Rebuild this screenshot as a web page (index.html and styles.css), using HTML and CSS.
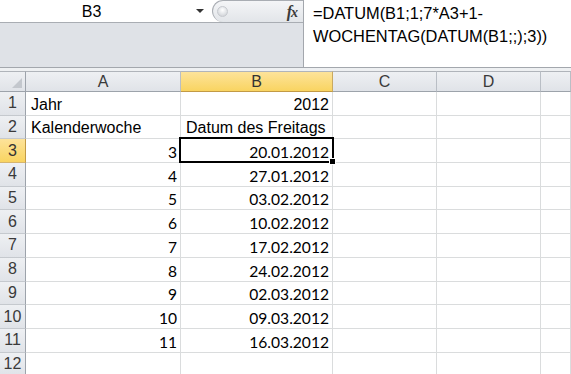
FILE: index.html
```html
<!DOCTYPE html>
<html lang="de">
<head>
<meta charset="utf-8">
<title>Excel</title>
<link rel="stylesheet" href="styles.css">
</head>
<body>
<div class="app">
  <div class="topbar">
    <div class="leftpane">
      <div class="nbrow">
        <div class="namebox"><span class="nbtext">B3</span><span class="nbarrow"></span></div>
        <div class="pill"><span class="knob"></span><span class="fx"><i>f</i><i class="x">x</i></span></div>
      </div>
    </div>
    <div class="formula">=DATUM(B1;1;7*A3+1-<br>WOCHENTAG(DATUM(B1;;);3))</div>
  </div>
  <div class="band"></div>
  <div class="sheet">
    <div class="hd corner"><span class="tri"></span></div>
    <div class="hd ch">A</div>
    <div class="hd ch sel">B</div>
    <div class="hd ch">C</div>
    <div class="hd ch">D</div>
    <div class="hd ch last"></div>

    <div class="hd rh">1</div>
    <div class="c txt">Jahr</div>
    <div class="c num">2012</div>
    <div class="c"></div><div class="c"></div><div class="c"></div>

    <div class="hd rh">2</div>
    <div class="c txt">Kalenderwoche</div>
    <div class="c txt">Datum des Freitags</div>
    <div class="c"></div><div class="c"></div><div class="c"></div>

    <div class="hd rh sel">3</div>
    <div class="c num cal">3</div>
    <div class="c num cal active">20.01.2012<span class="selbox"></span></div>
    <div class="c"></div><div class="c"></div><div class="c"></div>

    <div class="hd rh">4</div>
    <div class="c num cal">4</div>
    <div class="c num cal">27.01.2012</div>
    <div class="c"></div><div class="c"></div><div class="c"></div>

    <div class="hd rh">5</div>
    <div class="c num cal">5</div>
    <div class="c num cal">03.02.2012</div>
    <div class="c"></div><div class="c"></div><div class="c"></div>

    <div class="hd rh">6</div>
    <div class="c num cal">6</div>
    <div class="c num cal">10.02.2012</div>
    <div class="c"></div><div class="c"></div><div class="c"></div>

    <div class="hd rh">7</div>
    <div class="c num cal">7</div>
    <div class="c num cal">17.02.2012</div>
    <div class="c"></div><div class="c"></div><div class="c"></div>

    <div class="hd rh">8</div>
    <div class="c num cal">8</div>
    <div class="c num cal">24.02.2012</div>
    <div class="c"></div><div class="c"></div><div class="c"></div>

    <div class="hd rh">9</div>
    <div class="c num cal">9</div>
    <div class="c num cal">02.03.2012</div>
    <div class="c"></div><div class="c"></div><div class="c"></div>

    <div class="hd rh">10</div>
    <div class="c num cal">10</div>
    <div class="c num cal">09.03.2012</div>
    <div class="c"></div><div class="c"></div><div class="c"></div>

    <div class="hd rh">11</div>
    <div class="c num cal">11</div>
    <div class="c num cal">16.03.2012</div>
    <div class="c"></div><div class="c"></div><div class="c"></div>

    <div class="hd rh">12</div>
    <div class="c"></div>
    <div class="c"></div>
    <div class="c"></div><div class="c"></div><div class="c"></div>
  </div>
</div>
</body>
</html>
```
FILE: styles.css
```css
html, body {
  margin: 0;
  padding: 0;
  background: #ffffff;
  overflow: hidden;
}
.app {
  width: 571px;
  height: 374px;
  overflow: hidden;
  font-family: "Liberation Sans", Arial, sans-serif;
  color: #000;
}
.topbar {
  display: flex;
  height: 67px;
  border-bottom: 1px solid #a3a7ad;
  background: #ffffff;
}
.leftpane {
  width: 303px;
  flex: none;
  background: #dfe2e7;
  border-right: 1px solid #a3a7ad;
}
.nbrow {
  display: flex;
  height: 22px;
  border-bottom: 1px solid #a9adb3;
  background: #ffffff;
}
.namebox {
  width: 212px;
  flex: none;
  display: flex;
  align-items: center;
  font-size: 16px;
  color: #000;
}
.nbtext {
  width: 183px;
  text-align: center;
  padding-top: 1px;
}
.nbarrow {
  margin-left: 13px;
  width: 0;
  height: 0;
  border-left: 4px solid transparent;
  border-right: 4px solid transparent;
  border-top: 4px solid #333;
}
.pill {
  flex: 1;
  display: flex;
  align-items: center;
  justify-content: space-between;
  height: 22px;
  box-sizing: border-box;
  border: 1px solid #a9adb3;
  border-right: none;
  border-bottom: none;
  border-radius: 12px 0 0 12px;
  background: linear-gradient(#f4f5f7, #e2e5e9);
  padding: 0 5px 0 4px;
}
.knob {
  width: 11px;
  height: 11px;
  border-radius: 50%;
  background: radial-gradient(circle at 50% 35%, #ffffff 0, #e6e8eb 45%, #c9ccd1 100%);
  border: 1px solid #c6c9ce;
  box-sizing: border-box;
}
.fx {
  font-family: "Liberation Serif", "Times New Roman", serif;
  font-weight: bold;
  font-size: 16px;
  color: #3a3a3a;
  padding-top: 1px;
}
.fx i { font-style: italic; }
.fx .x { margin-left: -1px; font-size: 14px; }
.formula {
  flex: 1;
  padding: 2px 0 0 9px;
  font-size: 16.4px;
  line-height: 23.4px;
  color: #000;
  white-space: nowrap;
}
.band {
  height: 3px;
  background: #eef0f2;
}
.sheet {
  display: grid;
  grid-template-columns: 26px 155px 152px 104px 104px 1fr;
  grid-template-rows: 21px repeat(12, 23.7px);
}
.hd {
  box-sizing: border-box;
  background: linear-gradient(#eef0f3, #e0e3e8);
  color: #3a3a3a;
  font-size: 16px;
  display: flex;
  align-items: center;
  justify-content: center;
  border-right: 1px solid #b9bec5;
  border-bottom: 1px solid #b9bec5;
}
.ch {
  border-top: 1px solid #b0b4ba;
  border-bottom: 1px solid #9da3ab;
  padding-top: 1px;
}
.corner {
  border-top: 1px solid #b0b4ba;
  border-bottom: 1px solid #9da3ab;
  border-right: 1px solid #9da3ab;
  position: relative;
  justify-content: flex-end;
  align-items: flex-end;
  padding: 0 3px 3px 0;
}
.tri {
  width: 10px;
  height: 10px;
  background: #c3c7cd;
  clip-path: polygon(100% 0, 100% 100%, 0 100%);
}
.rh {
  border-right: 1px solid #9da3ab;
  border-bottom: 1px solid #c5c9ce;
}
.hd.sel {
  background: linear-gradient(#fde39a, #f9d461);
  color: #333;
}
.ch.sel {
  border-bottom-color: #c29a45;
  border-right-color: #c9a961;
}
.rh.sel {
  border-right-color: #c29a45;
  border-bottom-color: #d6b56e;
}
.c {
  box-sizing: border-box;
  border-right: 1px solid #dadcdd;
  border-bottom: 1px solid #dadcdd;
  font-size: 16px;
  display: flex;
  align-items: flex-end;
  white-space: nowrap;
  overflow: visible;
  line-height: 18px;
  padding-bottom: 1px;
}
.txt {
  justify-content: flex-start;
  padding-left: 5px;
}
.num {
  justify-content: flex-end;
  padding-right: 3px;
}
.cal {
  font-family: Lato, "Open Sans", sans-serif;
  font-size: 15.6px;
}
.active {
  position: relative;
}
.selbox {
  position: absolute;
  left: -2px;
  top: -2px;
  right: -2px;
  bottom: -1px;
  border: 2px solid #000;
  z-index: 2;
}
.selbox::after {
  content: "";
  position: absolute;
  right: -4px;
  bottom: -4px;
  width: 5px;
  height: 5px;
  background: #000;
  border: 1px solid #fff;
}
```
